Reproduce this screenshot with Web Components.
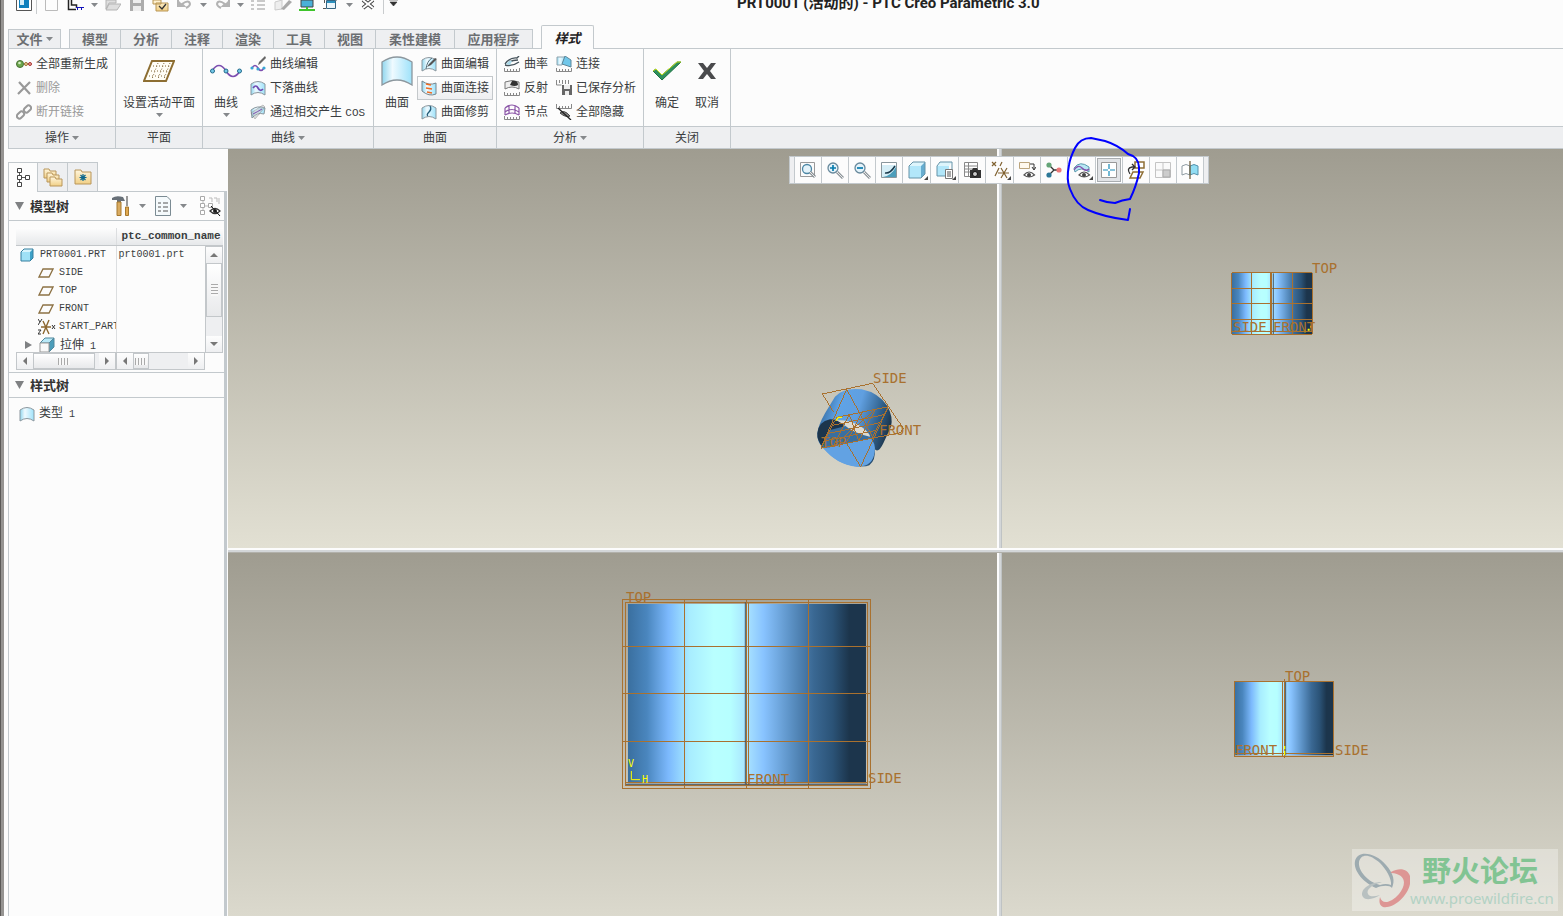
<!DOCTYPE html>
<html lang="zh-CN">
<head>
<meta charset="utf-8">
<title>PRT0001 (活动的) - PTC Creo Parametric 3.0</title>
<style>
html,body{height:100%}
body{margin:0;overflow:hidden;background:#fcfcfc;color:#3a3d40;font:12px/16px "Liberation Sans","Noto Sans CJK SC",sans-serif}
</style>
</head>
<body>
<cad-app></cad-app>
<script>
const define=(name,html,setup)=>customElements.define(name,class extends HTMLElement{
  constructor(){super();const t=document.createElement('template');t.innerHTML=html;
    this.attachShadow({mode:'open'}).append(t.content.cloneNode(true));}
  connectedCallback(){if(setup&&!this.ready){this.ready=true;setup(this,this.shadowRoot)}}
});

/* Each icon: [width, height, svg body] */
const G='<defs><linearGradient id="b" x2="1"><stop stop-color="#8fd6ee"/><stop offset=".35" stop-color="#effaff"/><stop offset="1" stop-color="#9ee2fa"/></linearGradient><linearGradient id="f" y2="1" x2="0"><stop stop-color="#fff6dd"/><stop offset="1" stop-color="#f1cf85"/></linearGradient></defs>';
const sheet='<path d="M1 4Q8-1 15 4V15Q8 10 1 15Z" fill="url(#b)" stroke="#8c979e"/>';
const ruler='<path d="M.5 12v3.500h15V12M3.500 13v2M6.500 13v2M9.500 13v2M12.500 13v2" fill="none" stroke="#888"/>';
const rulerTop='<path d="M.5 0v4.500h15V0M3.500 2v2M6.500 2v2M9.500 2v2M12.500 2v2" fill="none" stroke="#888"/>';
const eye='<path d="M6 14Q11 8 16.500 14Q11 18 6 14Z" fill="#fff" stroke="#555" stroke-width="1.200"/><circle cx="11" cy="14" r="2" fill="#444"/>';
const lens='<circle cx="7" cy="7" r="5" fill="#e4f3fa" stroke="#68899c" stroke-width="1.300"/><path d="M11 11l6 6" stroke="#8e969b" stroke-width="3"/><path d="M11 11l6 6" stroke="#e8e8e8"/>';
const ICONS={
 app:[18,12,'<path d="M1.500 0V10.500H16.500V0" fill="#fff" stroke="#555"/><path d="M4 0h10v8H4z" fill="#0f80bd"/><path d="M5 0h4v5H5z" fill="#d5edf8"/>'],
 blank:[16,12,'<path d="M1.500 0V10.500H13.500V0" fill="#fdfdfd" stroke="#bbb"/>'],
 model:[18,12,'<path d="M1.500 0V9.500H9M4.500 0v5h5v3" fill="none" stroke="#222" stroke-width="1.500"/><path d="M9 7.500h8M10.500 7v3M14.500 7v3" stroke="#11b" fill="none"/>'],
 open:[16,12,'<path d="M1 0h10v3H4L1 9zM4 4h12l-4 6H1z" fill="#dedede" stroke="#b4b4b4"/>'],
 save:[16,12,'<path d="M1 0h14v11H1z" fill="#acacac"/><path d="M4 0h8v3H4zM4 6h8v5H4z" fill="#eee"/>'],
 regen:[18,12,G+'<path d="M1 0h8v4H1zM4 3h12v8H4z" fill="url(#f)" stroke="#b99655"/><path d="M7 6l3 3 4-5" fill="none" stroke="#333" stroke-width="1.300"/>'],
 undo:[18,12,'<path d="M2 0V6H8L6 4Q13-1 14 4Q14 6 10 8" fill="none" stroke="#b3b3b3" stroke-width="2"/><path d="M2 0v6h6z" fill="#b3b3b3"/>'],
 redo:[18,12,'<path d="M16 0V6H10L12 4Q5-1 4 4Q4 6 8 8" fill="none" stroke="#b3b3b3" stroke-width="2"/><path d="M16 0v6h-6z" fill="#b3b3b3"/>'],
 list:[16,12,'<path d="M0 1h3M0 5h3M0 9h3M6 1h8M6 5h8M6 9h8" stroke="#b8b8b8" stroke-width="1.500"/>'],
 erase:[18,12,'<path d="M1 2L8 0v9l-7 1z" fill="#eee" stroke="#ccc"/><path d="M7 9L15 0l3 2-8 8z" fill="#aaa"/>'],
 screen:[18,12,'<path d="M3 0h12v7H3z" fill="#4ab0d8" stroke="#444"/><path d="M9 7v3M1 10h16" stroke="#3ec42b" stroke-width="2"/>'],
 windows:[18,12,'<path d="M2.500 0v3M1 8.500H4M6 0h9" stroke="#555" fill="none"/><path d="M4.500.5h9v8h-9z" fill="#eaf5fb" stroke="#356582"/><path d="M5 1h8v2H5z" fill="#2b91bf"/>'],
 close:[14,12,'<path d="M2 0l10 8M12 0L2 8" stroke="#444" stroke-width="4"/><path d="M2 0l10 8M12 0L2 8" stroke="#fff" stroke-width="2"/>'],
 down:[7,4,'<path d="M0 0h7L3.500 4z" fill="#85888b"/>'],
 tri:[9,8,'<path d="M0 0h9L4.500 8z" fill="#7f8183"/>'],
 more:[9,6,'<path d="M0 0h9M1 2h7L4.500 6z" fill="#333" stroke="#333" stroke-width=".6"/>'],
 regenAll:[16,16,'<circle cx="4" cy="8" r="3.500" fill="#6ca84d" stroke="#486f35"/><circle cx="3.500" cy="7" r="1.300" fill="#d5efc4"/><path d="M8 8h5" stroke="#666"/><circle cx="10" cy="8" r="1.500" fill="#ecd59b" stroke="#a07030"/><circle cx="14" cy="8" r="1.500" fill="#e9a79b" stroke="#a33"/>'],
 del:[16,16,'<path d="M3 2l11 12M14 2L2 14" stroke="#999" stroke-width="2.200"/>'],
 unlink:[16,16,'<g fill="none" stroke="#999" stroke-width="2"><rect x="9" y="1" width="5" height="8" rx="2.500" transform="rotate(45 11.500 5)"/><rect x="2" y="7" width="5" height="8" rx="2.500" transform="rotate(45 4.500 11)"/></g>'],
 plane:[32,22,'<path d="M9 1H31L23 21H1Z" fill="#fffef6" stroke="#8d6e32" stroke-width="2"/><path d="M10 6h18M8 11h18M6 16h18M15 3L9 19M21 3l-6 16M27 3l-6 16" stroke="#82693b" stroke-dasharray="1 2"/>'],
 curve:[32,16,'<path d="M2 8Q9-3 16 8T30 8" fill="none" stroke="#7d4fb0" stroke-width="1.700"/><g fill="#73c8e8" stroke="#256b8c"><circle cx="2.500" cy="8" r="2"/><circle cx="16" cy="8" r="2"/><circle cx="29.500" cy="8" r="2"/></g>'],
 curveEdit:[16,16,'<path d="M2 12Q5 7 8 12T14 12" fill="none" stroke="#7d4fb0" stroke-width="1.500"/><g fill="#39a6d5"><circle cx="2" cy="12" r="1.600"/><circle cx="8" cy="13" r="1.600"/><circle cx="14" cy="12" r="1.600"/></g><path d="M8 9L9 6 15 0l1 2-6 6z" fill="#666"/>'],
 drop:[16,16,G+sheet+'<path d="M3 8Q6 4 8 8T13 9" fill="none" stroke="#6d49b2" stroke-width="1.700"/>'],
 inter:[16,16,G+'<path d="M1 6Q7 1 15 4L14 10Q7 8 2 14Z" fill="url(#b)" stroke="#8c979e"/><path d="M1 9L13 1 15 3 5 15z" fill="#afb8bd" opacity=".45" stroke="#777"/><path d="M3 10Q7 8 12 5" stroke="#7d4fb0" fill="none"/>'],
 surface:[32,30,G+'<path d="M1 6Q16-4 31 6V29Q16 19 1 29Z" fill="url(#b)" stroke="#8c979e" stroke-width="1.300"/>'],
 sheet:[16,16,G+sheet],
 surfEdit:[16,16,G+sheet+'<path d="M5 13Q6 5 11 2" stroke="#58727e" fill="none"/><path d="M6 11L8 8 14 2l2 1-6 6z" fill="#555"/>'],
 surfJoin:[16,16,G+'<path d="M1 1Q8 6 15 3V14Q8 17 1 11Z" fill="url(#b)" stroke="#78868e"/><path d="M5 4l5 1M5 8l6 1M6 12l5 1" stroke="#ef6a21" stroke-width="1.700"/>'],
 surfTrim:[16,16,G+sheet+'<path d="M9 2Q11 5 8 8T7 12" fill="none" stroke="#245c78" stroke-width="1.300"/>'],
 curvature:[16,16,ruler+'<path d="M1 8Q6 1 13 2L15 0M1 9Q8 11 15 6M5 6Q9 4 14 4" fill="none" stroke="#47545c" stroke-width="1.400"/><path d="M2 8Q5 4 8 5L6 9z" fill="#a8d9ea"/>'],
 reflect:[16,16,ruler+'<path d="M1 2Q8-1 15 2V9Q8 5 1 9Z" fill="#eee" stroke="#777"/><path d="M8 1Q14 0 14 5Q11 7 6 5Z" fill="#333"/>'],
 knots:[16,16,ruler+'<path d="M1 4Q8-2 15 4M1 8Q8 3 15 8M1 11Q8 7 15 11M1 4v7M5 2v7M11 2v7M15 4v7" fill="none" stroke="#8c57a8" stroke-width="1.200"/>'],
 connect:[16,16,G+ruler+'<path d="M1 1h8L6 9H1z" fill="url(#b)" stroke="#8fa3ad"/><path d="M9 0l6 4v7L6 8z" fill="#70c7ea" stroke="#5d8699"/>'],
 savedAn:[16,16,'<path d="M.5 0v5h5M3.500 0v3M6.500 0v4M9.500 0v4M12.500 0v4" stroke="#888" fill="none"/><path d="M6 5h10v10H6z" fill="#666"/><path d="M8 5h6v4H8zM9 11h4v4H9z" fill="#eee"/>'],
 hideAll:[16,16,rulerTop+'<path d="M4 9Q8 5 14 12Q10 14 4 9z" fill="#888" stroke="#444"/><path d="M2 4l13 12" stroke="#222" stroke-width="1.300"/>'],
 ok:[30,20,'<path d="M1 10L4 8l6 6L25 1h4L10 19z" fill="#2f8f5d" stroke="#1d7342"/><path d="M1 10L4 8l6 6L25 1h4" fill="none" stroke="#c6e021"/>'],
 cancel:[20,18,'<path d="M1 1h5l4 5 4-5h5l-6 8 6 8h-5l-4-5-4 5H1l6-8z" fill="#494a4c"/>'],
 tree:[16,20,'<path d="M4.500 5v10M5 9.500h5" stroke="#555"/><g fill="#fff" stroke="#444"><path d="M2.500.5h4v4h-4zM2.500 7.500h4v4h-4zM10.500 7.500h4v4h-4zM2.500 14.500h4v4h-4z"/></g>'],
 folders:[20,20,G+'<g fill="url(#f)" stroke="#b9965a"><path d="M1 2h5l1 2h6v7H1z"/><path d="M4 6h5l1 2h6v7H4z"/><path d="M7 10h5l1 2h6v7H7z"/></g>'],
 fav:[18,16,G+'<path d="M1 1h6l1 2h9v12H1z" fill="url(#f)" stroke="#b9965a"/><path d="M9 5v7M5.500 8.500h7M6.500 6l5 5M11.500 6l-5 5" stroke="#0e688e" stroke-width="1.200"/>'],
 tools:[18,20,'<path d="M0 2Q4-1 11 1L13 5H9V6H5V4H0z" fill="#687078"/><path d="M5 6h4v13.500H5z" fill="#d9ab61" stroke="#a6792f"/><path d="M15 0v10" stroke="#999" stroke-width="2"/><path d="M13.500 11h3v8.500h-3z" fill="#e1a950" stroke="#a6792f"/>'],
 doc:[16,20,'<path d="M.5.5H12L15.500 4v15.500H.5z" fill="#f5fafc" stroke="#7b8b93"/><path d="M3 7h3M3 11h3M3 15h3M8 7h5M8 11h5M8 15h5" stroke="#555"/>'],
 treeHide:[21,20,'<path d="M3 5v12M4 10h7M9 2h3v4M14 2h3v4M19 2v6" stroke="#bbb" fill="none"/><g fill="#fff" stroke="#aaa"><path d="M.5.5h4v4h-4zM.5 7.500h4v4h-4zM.5 14.500h4v4h-4zM8.500 7.500h4v4h-4z"/></g><path d="M10 15Q15 10 20 15Q15 20 10 15z" fill="#fff" stroke="#333" stroke-width="1.300"/><circle cx="15" cy="15" r="2" fill="#222"/><path d="M11 10l9 10" stroke="#111"/>'],
 part:[14,14,'<path d="M1 4L4 1h9l-3 3z" fill="#d6f4fd"/><path d="M10 4l3-3v9l-3 3z" fill="#3da1c8"/><path d="M1 4h9v9H1z" fill="#9fe1f6"/><path d="M1 4L4 1h9v9l-3 3H1z" fill="none" stroke="#347f9f"/>'],
 datum:[16,10,'<path d="M5 1H15L11 9H1Z" fill="none" stroke="#8c7144" stroke-width="1.300"/>'],
 csys:[18,16,'<path d="M3 8h10M5 2l6 13M11 1L5 15" stroke="#8d6831" stroke-width="1.400"/><path d="M0 0l2 3 2-3M2 3L0 6M0 11h3l-3 4h3M14 6l3 4M17 6l-3 4" fill="none" stroke="#333"/>'],
 extrude:[16,16,'<path d="M1 6L6 1h9l-5 5z" fill="#b8e8f7" stroke="#51879c"/><path d="M10 6l5-5v9l-5 5z" fill="#4b9dba" stroke="#51879c"/><path d="M1 6h9v9H1z" fill="#f8f8f8" stroke="#999"/>'],
 right:[7,8,'<path d="M0 0v8l7-4z" fill="#7f8183"/>'],
 refit:[18,18,'<path d="M1.500 1.500h14v14h-14z" fill="#fbfbfb" stroke="#999"/><circle cx="8" cy="8" r="4.500" fill="#e4f3fa" stroke="#4c87a5" stroke-width="1.300"/><path d="M11 11l5 5" stroke="#8e969b" stroke-width="3"/><path d="M11 11l5 5" stroke="#e8e8e8"/>'],
 zin:[18,18,lens+'<path d="M7 4v6M4 7h6" stroke="#087cae" stroke-width="1.700"/>'],
 zout:[18,18,lens+'<path d="M4 7h6" stroke="#087cae" stroke-width="1.700"/>'],
 repaint:[18,18,G+'<path d="M1.500 1.500h15v15h-15z" fill="#d5eef7" stroke="#8a979d"/><path d="M2 2h14v2H2z" fill="#fff"/><path d="M3 16Q11 15 16 6V16z" fill="#4d9ebb"/><path d="M5 12Q10 13 15 5" fill="none" stroke="#18394b" stroke-width="1.500"/>'],
 shade:[18,18,'<path d="M1 5L5 1h12l-4 4z" fill="#ddf5fc"/><path d="M13 5l4-4v12l-4 4z" fill="#67add0"/><path d="M1 5h12v12H1z" fill="#b2e7fa"/><path d="M1 5L5 1h12v12l-4 4H1z" fill="none" stroke="#6593a8"/>'],
 saved:[18,18,'<path d="M1 5L4 1h12l-3 4z" fill="#ddf5fc"/><path d="M1 5h12v10H1z" fill="#b2e7fa"/><path d="M1 5L4 1h12v12l-3 2H1z" fill="none" stroke="#6593a8"/><path d="M9.500 8.500h7v9h-7z" fill="#fff" stroke="#777"/><path d="M11 11h4M11 13h4M11 15h4" stroke="#555"/>'],
 snapshot:[18,18,'<path d="M1.500 1.500h13v14h-13zM2 5h12M2 8h12M2 11h8M5.500 2v13" fill="#fff" stroke="#888"/><path d="M7 9h2l1-2h4l1 2h3v8H7z" fill="#333"/><circle cx="12" cy="13" r="2.500" fill="#ccc" stroke="#111"/>'],
 datums:[18,18,'<g stroke="#7f6130" fill="none" stroke-width="1.200"><path d="M1 1l4 4M5 1L1 5M11 1L9 5M8 7L4 15M7 12h11M10 7l6 10M16 7l-6 10"/></g>'],
 annot:[18,18,'<path d="M1.500 1.500h10v6h-10z" fill="#fff9ee" stroke="#bba57d"/><path d="M12 3h4v5M14 6l2 3 2-3" stroke="#333" fill="none"/>'+eye],
 spin:[18,18,'<path d="M4 4l5 5H15M9 9l-5 5" stroke="#333" stroke-width="1.300" fill="none"/><circle cx="4" cy="4" r="2.600" fill="#65a578"/><circle cx="14" cy="9" r="2.600" fill="#ec7878"/><circle cx="4" cy="14" r="2.600" fill="#2c7898"/>'],
 styleDisp:[18,18,'<path d="M1 7Q7-1 16 6V11Q8 5 2 11z" fill="#b8e7f4" stroke="#5b9aad"/><path d="M1 9Q5 3 9 7T16 8" stroke="#8550ad" fill="none" stroke-width="1.300"/>'+eye],
 four:[18,18,'<path d="M1.500 1.500h15v15h-15z" fill="#fff" stroke="#999"/><path d="M9 3v5M9 10v5M3 9h5M10 9h5" stroke="#168ab8" stroke-width="1.200"/>'],
 orient:[18,18,'<path d="M8 1h9v6H8zM6 11h10l-3 6H3z" fill="#fff" stroke="#8f6f35" stroke-width="1.500"/><path d="M3 13Q-1 7 5 6H7M5 3l3 3-3 3" fill="none" stroke="#333" stroke-width="1.300"/>'],
 grid:[18,18,'<path d="M1.500 1.500h15v15h-15zM9 2v14M2 9h14" fill="#fafafa" stroke="#c4c4c4"/><path d="M9 9h7v7H9z" fill="#ccc" stroke="#aaa"/>'],
 section:[18,18,'<path d="M1 5Q5 2 9 5V14Q5 11 1 14z" fill="#fff" stroke="#8e9ba2"/><path d="M9 5Q13 2 17 5V14Q13 11 9 14z" fill="#91ddf3" stroke="#5490aa"/><path d="M9 0v18" stroke="#716040" stroke-width="1.300"/>']
};
customElements.define('cad-icon',class extends HTMLElement{
  connectedCallback(){
    if(this.shadowRoot)return;
    const [w,h,b]=ICONS[this.getAttribute('name')];
    this.attachShadow({mode:'open'}).innerHTML=`<style>:host{display:inline-block;flex:none;width:${w}px;height:${h}px}svg{display:block}</style><svg width="${w}" height="${h}" viewBox="0 0 ${w} ${h}" aria-hidden="true">${b}</svg>`;
  }
});

define('title-bar',`<style>
:host{display:block;position:relative;height:25px}
nav{display:flex;align-items:flex-start;padding-left:8px;height:15px}
button{border:0;background:none;padding:0;display:flex;justify-content:center;width:24px;color:inherit}
button.dd{padding-top:3px;width:13px}
i{width:1px;height:14px;background:#c9ccce;margin-right:3px}
button + i + button:last-child{margin-left:-3px}
h1{position:absolute;top:0;left:733px;margin:0;font:bold 15px/6px Roboto,"Noto Sans CJK SC",sans-serif;color:#222;white-space:nowrap}
i.last{margin:0 0 0 3px}
</style><nav></nav><h1>PRT0001 (活动的) - PTC Creo Parametric 3.0</h1>`,(h,r)=>{
  r.querySelector('nav').innerHTML='app,|,blank,model,down,open,save,regen,undo,down,redo,down,list,erase,screen,windows,down,close,/,more'.split(',').map(n=>n=='|'?'<i></i>':n=='/'?'<i class="last"></i>':`<button class="${n=='down'?'dd':''}" aria-label="${n}"><cad-icon name="${n}"></cad-icon></button>`).join('');
});

define('ribbon-tab',`<style>
:host{display:block;flex:none}
button{font:bold 13px/18px "Noto Sans CJK SC",sans-serif;height:19px;width:var(--w,51px);margin:0;border:1px solid #c3c9cd;border-width:1px 0 0 1px;background:#eeeff1;color:#6b6e71;padding:0;display:flex;align-items:center;justify-content:center;gap:3px}
:host([last]) button{border-right-width:1px}
:host([active]) button{height:24px;border-width:1px 1px 0;background:#fcfcfc;color:#222;font-style:italic;border-radius:2px 2px 0 0}
:host([active]){margin-bottom:-1px;position:relative}
</style><button role="tab"><slot></slot></button>`);

define('ribbon-group',`<style>
:host{display:flex;flex-direction:column;flex:none;box-sizing:border-box;width:var(--w);border-right:1px solid #c3c9cd}
.c{height:77px;display:flex;align-items:flex-start;padding:0 3px;box-sizing:border-box}
footer{height:22px;border-top:1px solid #c3c9cd;box-sizing:border-box;background:#eeeff1;display:flex;align-items:center;justify-content:center;gap:3px}
</style><div class="c"><slot></slot></div><footer><span></span></footer>`,(h,r)=>{
  r.querySelector('span').textContent=h.getAttribute('label');
  if(h.hasAttribute('menu'))r.querySelector('footer').insertAdjacentHTML('beforeend','<cad-icon name="down"></cad-icon>');
});

define('tool-item',`<style>
:host{display:block}
button{height:24px;border:1px solid transparent;background:none;padding:0 3px;display:flex;gap:4px;align-items:center;font:inherit;color:inherit;white-space:nowrap}
:host([on]) button{border-color:#c4c8cb;background:linear-gradient(#fff,#eeeff1)}
:host([off]) button{color:#999}
</style><button><span><slot></slot></span></button>`,(h,r)=>{
  r.querySelector('button').insertAdjacentHTML('afterbegin',`<cad-icon name="${h.getAttribute('icon')}"></cad-icon>`);
});

define('big-tool',`<style>
:host{display:block;flex:none}
button{height:74px;min-width:40px;border:0;background:none;padding:6px 0 0;display:flex;flex-direction:column;align-items:center;font:inherit;color:inherit;white-space:nowrap}
.i{height:32px;display:flex;align-items:center}
.t{margin-top:8px}
.d{margin-top:2px;height:4px;display:flex}
</style><button><span class="i"></span><span class="t"><slot></slot></span><span class="d"></span></button>`,(h,r)=>{
  r.querySelector('.i').innerHTML=`<cad-icon name="${h.getAttribute('icon')}"></cad-icon>`;
  if(h.hasAttribute('menu'))r.querySelector('.d').innerHTML='<cad-icon name="down"></cad-icon>';
});

define('cad-ribbon',`<style>
:host{display:block}
.tabs{display:flex;align-items:flex-end;height:23px}
.body{display:flex;border:1px solid #c3c9cd;border-right:0}
.col{padding-top:3px;flex:none}
.rest{flex:1;display:flex;flex-direction:column;justify-content:flex-end}
.rest div{height:21px;background:#eeeff1;border-top:1px solid #c3c9cd}
.gap{width:8px}
.m{font:11px/16px "Liberation Mono",monospace}
</style>
<div class="tabs" role="tablist"><ribbon-tab last style="--w:53px">文件<cad-icon name="down"></cad-icon></ribbon-tab><span class="gap"></span>
<ribbon-tab>模型</ribbon-tab><ribbon-tab>分析</ribbon-tab><ribbon-tab>注释</ribbon-tab><ribbon-tab>渲染</ribbon-tab><ribbon-tab>工具</ribbon-tab><ribbon-tab>视图</ribbon-tab><ribbon-tab style="--w:79px">柔性建模</ribbon-tab><ribbon-tab last style="--w:79px">应用程序</ribbon-tab><span class="gap"></span><ribbon-tab active style="--w:53px">样式</ribbon-tab></div>
<div class="body">
<ribbon-group label="操作" menu style="--w:107px"><div class="col"><tool-item icon="regenAll">全部重新生成</tool-item><tool-item off icon="del">删除</tool-item><tool-item off icon="unlink">断开链接</tool-item></div></ribbon-group>
<ribbon-group label="平面" style="--w:87px"><big-tool icon="plane" menu style="margin-left:4px">设置活动平面</big-tool></ribbon-group>
<ribbon-group label="曲线" menu style="--w:171px"><big-tool icon="curve" menu>曲线</big-tool><div class="col"><tool-item icon="curveEdit">曲线编辑</tool-item><tool-item icon="drop">下落曲线</tool-item><tool-item icon="inter">通过相交产生 <span class="m">COS</span></tool-item></div></ribbon-group>
<ribbon-group label="曲面" style="--w:123px"><big-tool icon="surface">曲面</big-tool><div class="col"><tool-item icon="surfEdit">曲面编辑</tool-item><tool-item on icon="surfJoin">曲面连接</tool-item><tool-item icon="surfTrim">曲面修剪</tool-item></div></ribbon-group>
<ribbon-group label="分析" menu style="--w:147px"><div class="col"><tool-item icon="curvature">曲率</tool-item><tool-item icon="reflect">反射</tool-item><tool-item icon="knots">节点</tool-item></div><div class="col"><tool-item icon="connect">连接</tool-item><tool-item icon="savedAn">已保存分析</tool-item><tool-item icon="hideAll">全部隐藏</tool-item></div></ribbon-group>
<ribbon-group label="关闭" style="--w:87px"><big-tool icon="ok">确定</big-tool><big-tool icon="cancel">取消</big-tool></ribbon-group>
<div class="rest"><div></div></div>
</div>`);

define('scroll-bar',`<style>
:host{display:flex;box-sizing:border-box;background:#eeeff1;border:1px solid #c3c7ca}
:host([v]){flex-direction:column}
button{flex:none;width:16px;height:16px;padding:0;border:0;background:linear-gradient(#fdfdfd,#eeeff1);display:flex;align-items:center;justify-content:center}
button::before{content:"";border:4px solid transparent;border-right-color:#777;border-left-width:0}
button:last-child::before{border-left:4px solid #777;border-right:0}
:host([v]) button::before{border:4px solid transparent;border-bottom-color:#777;border-top-width:0}
:host([v]) button:last-child::before{border-top:4px solid #777;border-bottom:0}
.t{flex:none;box-sizing:border-box;width:var(--t);border:1px solid #c3c7ca;background:linear-gradient(#fff,#e8e9eb);display:flex;align-items:center;justify-content:center}
.t::before{content:"";width:12px;height:7px;background:repeating-linear-gradient(90deg,#aaa 0 1px,#f8f8f8 1px 3px)}
:host([v]) .t{width:auto;height:var(--t)}
:host([v]) .t::before{width:7px;height:12px;background:repeating-linear-gradient(#aaa 0 1px,#f8f8f8 1px 3px)}
.s{flex:1}
</style><button aria-label="back"></button><div class="t"></div><div class="s"></div><button aria-label="forward"></button>`);

define('model-tree',`<style>
:host{display:block;position:relative;margin:7px 1px 0 7px;height:142px}
.wrap{height:125px;overflow:hidden}
table{border-collapse:collapse;table-layout:fixed;width:100%;font:10px/18px "Liberation Mono",monospace}
th{height:17px;line-height:17px;padding:0 0 0 5px;font-size:11px;text-align:left;background:linear-gradient(#fdfdfd,#e6e8ea);box-sizing:border-box;border-bottom:1px solid #c3c7ca;overflow:hidden;white-space:nowrap}
th:first-child,td:first-child{border-right:1px solid #dcdee0;width:100px;box-sizing:border-box}
td{height:18px;padding:0 0 0 2px;overflow:hidden;white-space:nowrap}
.r{display:flex;align-items:center;height:18px;gap:5px;padding-left:1px}
.k{padding-left:20px}
.x{padding-left:7px}
.x button{border:0;background:none;padding:0;display:flex;width:9px}
.z{font:12px/18px "Noto Sans CJK SC",sans-serif}
.m{font:10px/18px "Liberation Mono",monospace;white-space:pre}
.v{position:absolute;right:0;top:18px;width:18px;height:107px}
.a{position:absolute;left:0;top:124px;width:100px;height:18px}
.b{position:absolute;left:100px;right:18px;top:124px;height:18px}
</style><div class="wrap"><table>
<thead><tr><th aria-label="name"></th><th>ptc_common_name</th></tr></thead>
<tbody><tr><td><div class="r"><cad-icon name="part" style="margin:0 1px"></cad-icon>PRT0001.PRT</div></td><td>prt0001.prt</td></tr>
<tr><td><div class="r k"><cad-icon name="datum"></cad-icon>SIDE</div></td><td></td></tr>
<tr><td><div class="r k"><cad-icon name="datum"></cad-icon>TOP</div></td><td></td></tr>
<tr><td><div class="r k"><cad-icon name="datum"></cad-icon>FRONT</div></td><td></td></tr>
<tr><td><div class="r k" style="gap:3px"><cad-icon name="csys"></cad-icon>START_PART</div></td><td></td></tr>
<tr><td><div class="r x"><button aria-label="expand"><cad-icon name="right"></cad-icon></button><cad-icon name="extrude"></cad-icon><span class="z">拉伸<span class="m"> 1</span></span></div></td><td></td></tr></tbody></table></div>
<scroll-bar v class="v" style="--t:54px"></scroll-bar><scroll-bar class="a" style="--t:62px"></scroll-bar><scroll-bar class="b" style="--t:16px"></scroll-bar>`);

define('side-panel',`<style>
:host{display:flex;flex-direction:column;width:220px;flex:none;padding-top:13px;box-sizing:border-box}
.tabs{display:flex}
.tabs button{width:30px;height:29px;padding:0;border:1px solid #c3c9cd;border-width:1px 1px 0 0;background:#eeeff1;display:flex;align-items:center;justify-content:center;box-sizing:border-box}
.tabs button:first-child{background:#fcfcfc;border-left-width:1px;position:relative;margin-bottom:-1px;height:30px}
main{flex:1;border:1px solid #c3c9cd;border-width:1px 3px 0 1px;margin-right:1px}
h2{margin:0;height:28px;display:flex;align-items:center;gap:6px;padding-left:6px;border-bottom:1px solid #c3c9cd;font:bold 13px/18px "Noto Sans CJK SC",sans-serif;color:#333}
h2 .tb{margin-left:auto;display:flex;align-items:center;gap:9px;padding-right:3px}
.tb button{border:0;background:none;padding:0;display:flex}
h2.s{height:24px;border-top:1px solid #c3c9cd;margin-top:2px}
.row{display:flex;align-items:center;gap:4px;padding:7px 10px}
.row span span{font:10px/16px "Liberation Mono",monospace;white-space:pre}
</style><div class="tabs"><button aria-label="模型树"><cad-icon name="tree"></cad-icon></button><button aria-label="文件夹浏览器"><cad-icon name="folders"></cad-icon></button><button aria-label="收藏夹"><cad-icon name="fav"></cad-icon></button></div>
<main><h2><cad-icon name="tri"></cad-icon>模型树<div class="tb"><button aria-label="设置"><cad-icon name="tools"></cad-icon></button><cad-icon name="down"></cad-icon><button aria-label="显示"><cad-icon name="doc"></cad-icon></button><cad-icon name="down"></cad-icon><button aria-label="隐藏" style="margin-left:4px"><cad-icon name="treeHide"></cad-icon></button></div></h2>
<model-tree></model-tree>
<h2 class="s"><cad-icon name="tri"></cad-icon>样式树</h2>
<div class="row"><cad-icon name="sheet"></cad-icon><span>类型<span> 1</span></span></div></main>`);

define('view-bar',`<style>
:host{position:absolute;left:561px;top:7px;z-index:3;display:flex;height:28px;box-sizing:border-box;background:#fcfcfc;border:1px solid #c3c9cd}
.g{width:4px;background:#eeeff1}
button{position:relative;width:27px;height:26px;padding:0;border:0;border-left:1px solid #c3c9cd;background:#fcfcfc;display:flex;align-items:center;justify-content:center;box-sizing:border-box}
button.m{width:28px}
button.m::after{content:"";position:absolute;right:2px;bottom:3px;border:2px solid #444;border-top-color:transparent;border-left-color:transparent}
button.on{background:#e2e4e7;box-shadow:inset 0 0 0 1px #fff,inset 0 0 0 2px #a9adb0}
.e{border-left:1px solid #c3c9cd}
.ink{position:absolute;left:271px;top:-25px;pointer-events:none}
</style><div class="g"></div>`,(h,r)=>{
  const bar='refit,zin,zout,repaint,shade*,saved*,snapshot,datums*,annot,spin,styleDisp*,four,orient,grid,section'.split(',').map(n=>{
    const k=n.replace('*','');return `<button aria-label="${k}" class="${n!=k?'m':''}${k=='four'?'on':''}"><cad-icon name="${k}"></cad-icon></button>`;}).join('');
  r.querySelector('.g').insertAdjacentHTML('afterend',bar+`<div class="g e"></div><svg class="ink" width="85" height="95" viewBox="0 0 85 95"><path d="M38 67Q46 70 53 70Q60 67 68 66Q74 54 77 40Q78 27 71 23L66 21Q56 12 43 8L29 5Q18 5 13 15Q8 25 7 32Q4 47 8 56Q14 72 26 77Q42 84 66 87L68 76" transform="translate(1 1)" fill="none" stroke="#0000ff" stroke-width="2" stroke-linecap="round" stroke-linejoin="round"/></svg>`);
});

/* Scene drawings: [left, top, width, height, geometry in thirds of a pixel, labels] */
const cyl='<defs><linearGradient id="c"><stop stop-color="#3a6f9f"/><stop offset=".08" stop-color="#4a86be"/><stop offset=".17" stop-color="#7cb9fd"/><stop offset=".26" stop-color="#a8edff"/><stop offset=".36" stop-color="#b9ffff"/><stop offset=".43" stop-color="#b6ffff"/><stop offset=".5" stop-color="#a8e2ff"/><stop offset=".57" stop-color="#88c3ff"/><stop offset=".68" stop-color="#5d93c7"/><stop offset=".78" stop-color="#3a6893"/><stop offset=".86" stop-color="#2b5377"/><stop offset=".93" stop-color="#1c354c"/><stop offset="1" stop-color="#1c354c"/></linearGradient><linearGradient id="d" x1="0" y1=".3" x2="1" y2=".6"><stop stop-color="#2f6599"/><stop offset=".25" stop-color="#5fa3e6"/><stop offset=".5" stop-color="#609fe0"/><stop offset=".75" stop-color="#356794"/><stop offset=".95" stop-color="#1c354c"/></linearGradient></defs>';
const SCENES={
 iso:[562,211,160,120,`<path d="M82 220Q85 195 105 160L135 110Q160 82 215 88Q265 98 292 138Q310 170 303 200L280 250Q266 280 254 268Q258 300 238 316Q225 322 190 318Q140 310 105 270Q80 250 82 220Z" fill="url(#d)"/><path d="M148 208Q190 200 240 232Q258 250 254 275Q250 320 200 320Q140 314 100 264Q120 230 148 208Z" fill="#62a2e3"/><path d="M82 220Q85 185 120 178Q140 178 165 190Q145 225 120 262L98 262Q80 240 82 220Z" fill="#1c354c"/><path d="M120 210L180 195 245 235 95 265Z" fill="#3a6f9f"/><path d="M138 180Q190 180 220 205Q238 218 240 230Q190 220 160 193Z" fill="#dddacf"/><path fill="none" stroke="#a9712f" stroke-width="3" shape-rendering="crispEdges" d="M97 102L248 70 340 205 332 218 245 235 92 265 140 172 295 140 245 235M97 102L130 155M170 88L92 265M170 88L250 235M170 250L212 320 295 140M178 164L130 258M217 156L168 250M256 148L206 243M128 196L282 164M116 220L270 188M104 243L258 211M178 164L206 243M130 258L256 148"/><path d="M138 182L145 172H156" stroke="#ff0" stroke-width="4" fill="none"/>`,[[83,23,'SIDE'],[31,87,'TOP'],[89,75,'FRONT']]],
 top:[982,101,140,100,`<path d="M66 68H307V252H66z" fill="url(#c)"/><path fill="none" stroke="#a9712f" stroke-width="3" shape-rendering="crispEdges" d="M65 68H307V253H65ZM124 68V252M181 68V252M185 68V252M247 68V252M65 115H307M65 160H307M65 208H307M65 244H307"/><path d="M190 70V252" stroke="#475866" stroke-width="3"/><path d="M282 244h6M296 242v-6M300 230h4" stroke="#ff0" stroke-width="6"/>`,[[102,23,'TOP'],[23,82,'SIDE'],[63,82,'FRONT']]],
 front:[382,27,310,220,`<path d="M54 72H768V610H54z" fill="url(#c)"/><path fill="none" stroke="#a9712f" stroke-width="3" shape-rendering="crispEdges" d="M37 58H782V626H37ZM46 67H773V616H46ZM223 58V626M409 58V626M416 68V616M595 58V626M37 199H782M37 340H782M37 484H782M46 607H773"/><path d="M406 67V614M48 613H772" stroke="#46535c" stroke-width="3"/><path d="M64 573V599H90" fill="none" stroke="#ff0" stroke-width="3"/>`,[[16,22,'TOP'],[137,204,'FRONT'],[258,203,'SIDE'],[18,187,'V','y'],[32,203,'H','y']]],
 side:[992,107,160,110,`<path d="M44 66H340V286H44z" fill="url(#c)"/><path fill="none" stroke="#a9712f" stroke-width="3" shape-rendering="crispEdges" d="M43 64H341V290H43ZM187 64V290M193 58V294M43 281H341"/><path d="M197 66V286" stroke="#46535c" stroke-width="3"/><path d="M194 258v10M194 272v14" stroke="#ff0" stroke-width="4"/>`,[[65,21,'TOP'],[15,95,'FRONT'],[115,95,'SIDE']]]
};
/* The right-hand views start 774 pixels into the canvas */
SCENES.top[0]-=774;SCENES.side[0]-=774;
define('view-port',`<style>
:host{display:block;position:relative;min-width:0;overflow:hidden;background:linear-gradient(#9f9c90,var(--end,#e2e0d3))}
svg{position:absolute;overflow:visible}
text{font:14px "DejaVu Sans Mono","Liberation Mono",monospace;fill:#a9712f}
text.y{font-size:10px;fill:#ff0}
</style>`,(h,r)=>{
  const [x,y,w,ht,g,l]=SCENES[h.getAttribute('scene')];
  r.innerHTML+=`<svg style="left:${x}px;top:${y}px" width="${w}" height="${ht}">${cyl}<g transform="scale(.3333)">${g}</g>${l.map(t=>`<text x="${t[0]}" y="${t[1]}" class="${t[3]||''}">${t[2]}</text>`).join('')}</svg>`;
});

define('water-mark',`<style>
:host{position:absolute;right:5px;bottom:5px;width:206px;height:62px;background:rgba(255,255,255,.32);display:flex}
svg{flex:none}
div{display:flex;flex-direction:column}
b{font:bold 29px/40px "Noto Sans CJK SC",sans-serif;color:#82c493;margin-left:12px}
a{font:15px/18px "Noto Sans",sans-serif;color:#b3d2c4;text-decoration:none}
</style><svg width="58" height="62" viewBox="0 0 58 62"><path fill-rule="evenodd" d="M3 12C6 0 24 4 34 16C42 25 43 32 40 39C38 36 30 36 24 39C12 34 1 22 3 12ZM7 13C6 22 16 33 28 36Q34 34 39 36C40 30 34 20 28 14C18 5 9 4 7 13Z" fill="#9dabb0"/><path d="M39 23C52 16 61 24 58 35C55 49 40 60 31 58Q26 56 28 48C30 56 39 54 47 45C55 35 54 25 39 24z" fill="#dd9694"/><path d="M30 33C16 33 7 42 11 48C14 52 22 50 28 46Q18 49 16 45C14 41 19 36 30 33z" fill="#b8c0c0"/></svg><div><b>野火论坛</b><a href="#">www.proewildfire.cn</a></div>`);

define('graphics-area',`<style>
:host{flex:1;min-width:0;position:relative;display:grid;grid-template-columns:769fr 5px 561fr;grid-template-rows:399fr 5px 363fr}
.v{grid-area:1/2/4/3;background:linear-gradient(90deg,#fcfcfc 0 2px,#d3d6d8 2px 4px,#bfc3c4 4px)}
.h{grid-area:2/1/3/4;background:linear-gradient(#fcfcfc 0 2px,#d3d6d8 2px 4px,#b1b0aa 4px)}
.l{--end:#dbd9cd}
</style><div class="v"></div><div class="h"></div>
<view-port scene="iso" style="grid-area:1/1"></view-port><view-port scene="top" style="grid-area:1/3"></view-port>
<view-port class="l" scene="front" style="grid-area:3/1"></view-port><view-port class="l" scene="side" style="grid-area:3/3"></view-port>
<view-bar></view-bar><water-mark></water-mark>`);

define('cad-app',`<style>
:host{display:flex;flex-direction:column;height:100vh;box-sizing:border-box;border-left:4px solid #969492;position:relative}
:host::before{content:"";position:absolute;left:-4px;top:0;bottom:0;width:1px;background:#5c5a58}
title-bar,cad-ribbon{flex:none}
cad-ribbon{margin-left:4px}
.w{flex:1;min-height:0;display:flex;padding-left:4px}
</style><title-bar></title-bar><cad-ribbon></cad-ribbon><div class="w"><side-panel></side-panel><graphics-area></graphics-area></div>`);
</script>
</body>
</html>
